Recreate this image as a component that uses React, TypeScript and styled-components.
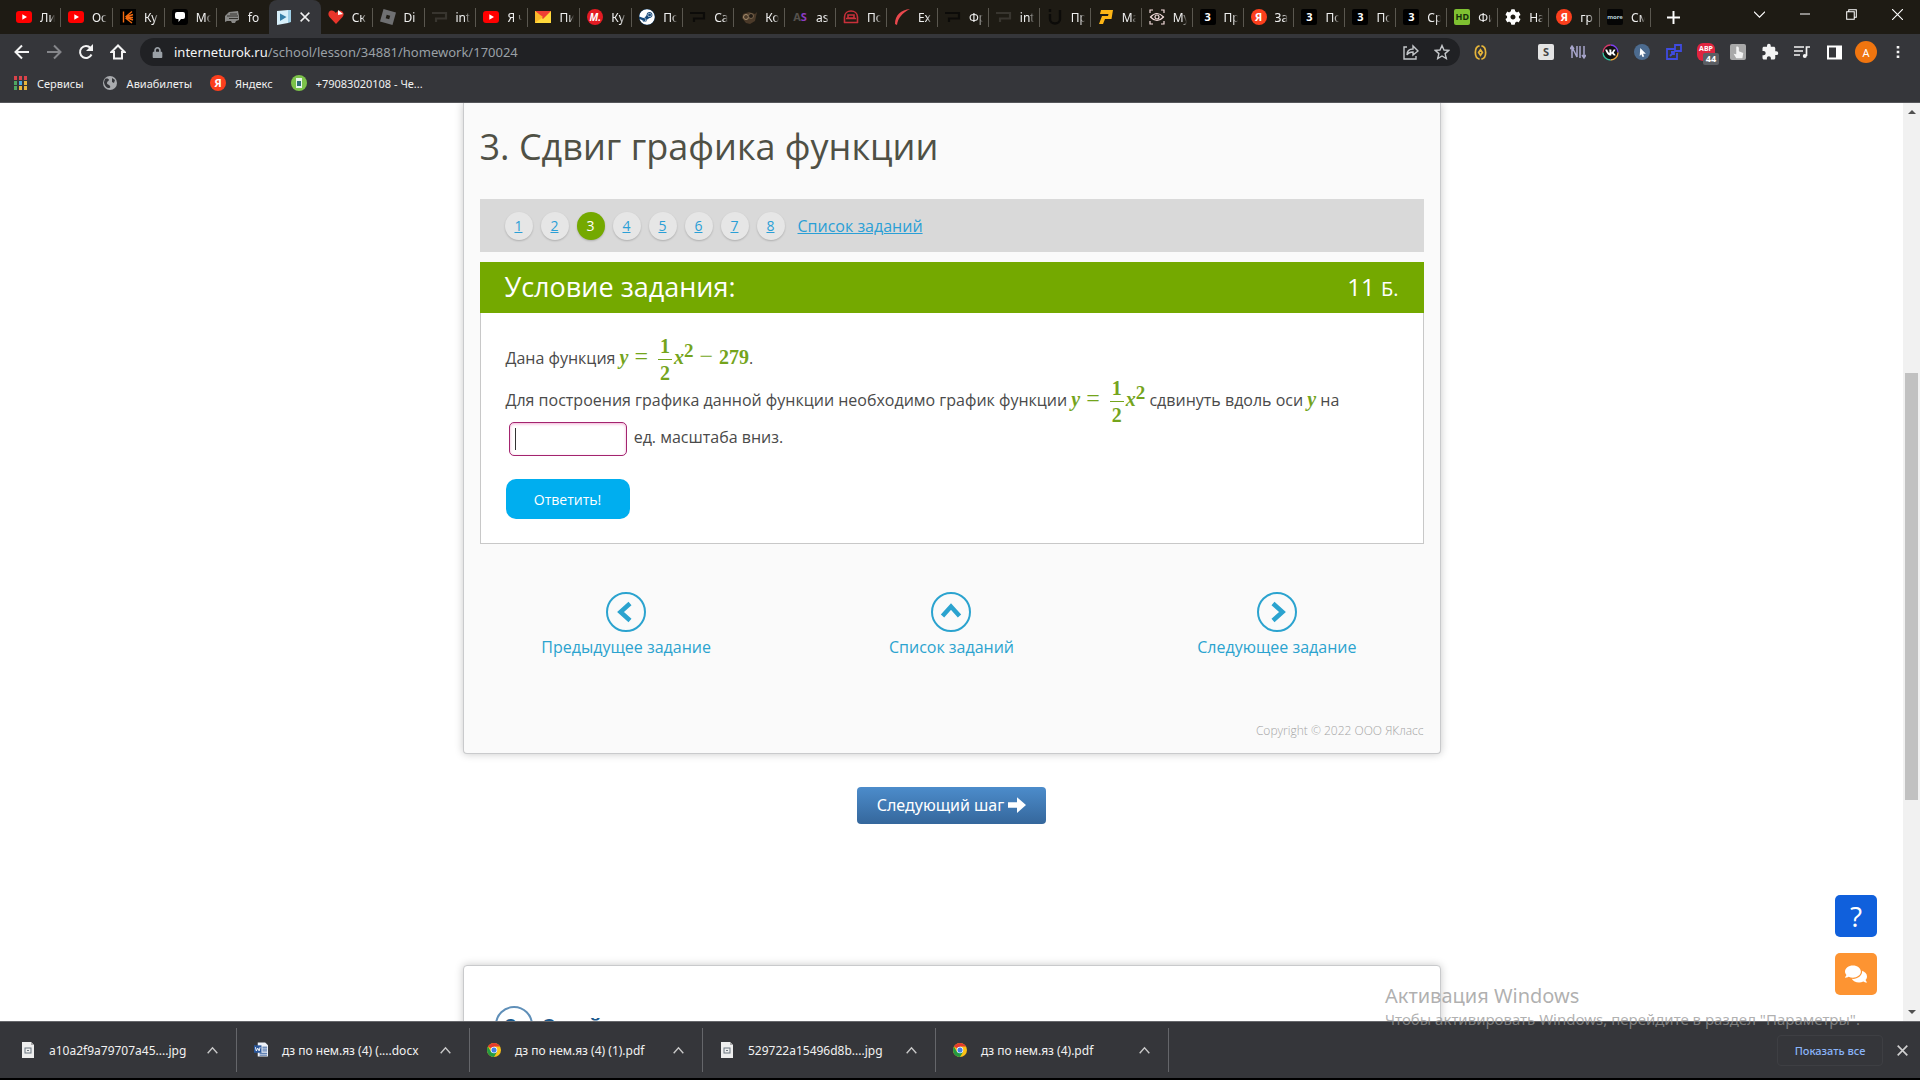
import React from "react";
import styled, { createGlobalStyle } from "styled-components";
import { FaSteam, FaCog, FaLock, FaVk, FaComments } from "react-icons/fa";
import { MdExtension } from "react-icons/md";

const ui = '"Noto Sans", "Open Sans", sans-serif';
const body = '"Open Sans", "Noto Sans", sans-serif';

const Global = createGlobalStyle`
  * { box-sizing: border-box; }
  body { margin: 0; background: #fff; font-family: ${body}; }
  button, input { font-family: inherit; margin: 0; }
  button { border: 0; padding: 0; background: none; color: inherit; cursor: pointer; }
  p, h1, h2 { margin: 0; font-weight: 400; }
  svg { display: block; flex: none; }
`;

const Screen = styled.div`
  height: 100vh;
  display: flex;
  flex-direction: column;
  overflow: hidden;
  position: relative;
`;

/* ---------- browser chrome ---------- */

const TabStrip = styled.div`
  height: 34px;
  flex: none;
  display: flex;
  background: #1e1b14;
  padding-left: 9px;
  font-family: ${ui};
`;
const Tabs = styled.div`
  flex: 1;
  min-width: 0;
  display: flex;
`;
const Tab = styled.button<{ $active?: boolean; $plain?: boolean }>`
  flex: 1 1 20px;
  min-width: 0;
  height: 34px;
  display: flex;
  align-items: center;
  gap: 8px;
  padding: 0 6px 0 7px;
  color: #f0f0f0;
  font-size: 12px;
  background: ${(p) =>
    p.$active ? "#35363a" : p.$plain ? "none" : "linear-gradient(#5a574f, #5a574f) no-repeat right 8px / 1px 19px"};
  border-radius: ${(p) => (p.$active ? "8px 8px 0 0" : "0")};
  &:nth-child(-n + 12) {
    flex-basis: 21px;
  }
`;
const TabTitle = styled.span`
  flex: 1;
  min-width: 0;
  overflow: hidden;
  white-space: nowrap;
  text-align: left;
  mask-image: linear-gradient(90deg, #000 65%, transparent);
`;
const WindowControls = styled.div`
  width: 269px;
  flex: none;
  display: flex;
  justify-content: flex-end;
  color: #fff;
`;
const NewTab = styled.button`
  width: 44px;
  height: 34px;
  display: grid;
  place-items: center;
  margin-right: auto;
`;
const WinButton = styled.button`
  width: 46px;
  height: 28px;
  display: grid;
  place-items: center;
`;
const Badge = styled.span<{ $bg: string; $fg: string; $round?: boolean; $size?: number }>`
  width: 16px;
  height: 16px;
  flex: none;
  display: grid;
  place-items: center;
  overflow: hidden;
  background: ${(p) => p.$bg};
  color: ${(p) => p.$fg};
  border-radius: ${(p) => (p.$round ? "50%" : "2px")};
  font-family: ${ui};
  font-size: ${(p) => p.$size ?? 11}px;
  font-weight: 700;
  line-height: 16px;
`;
const Muted = styled.span`
  color: #55514c;
`;
const Toolbar = styled.div`
  height: 36px;
  flex: none;
  display: flex;
  align-items: center;
  padding: 0 6px;
  background: #35363a;
  color: #f1f1f1;
  font-family: ${ui};
`;
const NavButton = styled.button<{ $dim?: boolean }>`
  width: 32px;
  height: 28px;
  display: grid;
  place-items: center;
  color: ${(p) => (p.$dim ? "#85868a" : "#f4f4f4")};
`;
const Omnibox = styled.div`
  flex: 1;
  height: 28px;
  display: flex;
  align-items: center;
  gap: 11px;
  margin: 0 4px 0 6px;
  padding: 0 8px 0 12px;
  border-radius: 14px;
  background: #202124;
  color: #9aa0a6;
  font-size: 13px;
`;
const Url = styled.span`
  flex: 1;
  white-space: nowrap;
  b { font-weight: 400; color: #f5f5f5; }
`;
const OmniIcon = styled.button`
  width: 20px;
  display: grid;
  place-items: center;
  color: #c4c7ca;
`;
const Extensions = styled.div`
  display: flex;
`;
const LoneExtension = styled(NavButton)`
  margin-right: 34px;
`;
const Avatar = styled.span`
  width: 22px;
  height: 22px;
  border-radius: 50%;
  background: #f0750f;
  color: #fff;
  font-size: 11px;
  display: grid;
  place-items: center;
`;
const BlockerIcon = styled.span`
  position: relative;
  width: 18px;
  height: 18px;
  padding-top: 2px;
  border-radius: 6px;
  background: #e0243f;
  color: #fff;
  font-size: 7px;
  line-height: 8px;
  font-weight: 700;
  text-align: center;
`;
const BlockerCount = styled.span`
  position: absolute;
  left: 6px;
  top: 10px;
  width: 16px;
  height: 12px;
  border-radius: 2px;
  background: #5b5e63;
  font-size: 9px;
  line-height: 12px;
  text-align: center;
`;
const Bookmarks = styled.nav`
  height: 33px;
  flex: none;
  display: flex;
  gap: 18px;
  padding: 4px 14px 10px;
  background: #35363a;
  border-bottom: 1px solid #55565a;
  font-family: ${ui};
`;
const Bookmark = styled.a`
  display: flex;
  align-items: center;
  gap: 9px;
  color: #f1f1f1;
  font-size: 11px;
  text-decoration: none;
  white-space: nowrap;
`;

/* ---------- page ---------- */

const Viewport = styled.div`
  flex: 1;
  min-height: 0;
  display: flex;
  overflow: hidden;
`;
const Page = styled.main`
  flex: 1;
  min-width: 0;
  display: flex;
  flex-direction: column;
  align-items: center;
  background: #fff;
`;
const Scrollbar = styled.div`
  width: 17px;
  flex: none;
  display: flex;
  flex-direction: column;
  align-items: center;
  padding: 5px 0;
  background: #f1f1f1;
  color: #505050;
`;
const Thumb = styled.div`
  width: 13px;
  flex: 0 0 47%;
  margin: 257px 0 auto;
  background: #c1c1c1;
`;
const Card = styled.section<{ $first?: boolean }>`
  width: 978px;
  max-width: 100%;
  flex: none;
  border: 1px solid #c9cacc;
  border-top-width: ${(p) => (p.$first ? 0 : 1)}px;
  border-radius: ${(p) => (p.$first ? "0 0 4px 4px" : "4px 4px 0 0")};
  background: ${(p) => (p.$first ? "#fafafa" : "#fff")};
  box-shadow: 0 0 8px rgba(0, 0, 0, 0.22);
`;
const Title = styled.h1`
  padding: 19px 16px 27px;
  font-size: 36px;
  line-height: 50px;
  color: #4f5045;
`;
const Steps = styled.nav`
  display: flex;
  align-items: center;
  gap: 8px;
  height: 53px;
  margin: 0 16px;
  padding: 0 25px;
  background: #d9d9d9;
`;
const Step = styled.a<{ $current?: boolean }>`
  width: 28px;
  height: 28px;
  border-radius: 50%;
  display: grid;
  place-items: center;
  font-size: 14px;
  background: ${(p) => (p.$current ? "#74a900" : "#e6e6e6")};
  color: ${(p) => (p.$current ? "#fff" : "#2a9fd6")};
  text-decoration: ${(p) => (p.$current ? "none" : "underline")};
  box-shadow: 0 1px 2px rgba(0, 0, 0, 0.2);
`;
const StepList = styled.a`
  margin-left: 5px;
  font-size: 16px;
  color: #2a9fd6;
`;
const Task = styled.article`
  margin: 10px 16px 0;
  border: 1px solid #c8c8c8;
  background: #fff;
`;
const TaskHead = styled.header`
  display: flex;
  align-items: center;
  justify-content: space-between;
  height: 51px;
  margin: -1px -1px 0;
  padding: 0 25px;
  background: #74a900;
  color: #fff;
`;
const TaskTitle = styled.h2`
  font-size: 27px;
  line-height: 34px;
  padding-bottom: 2px;
`;
const Points = styled.span`
  font-size: 24px;
  line-height: 34px;
  small { font-size: 20px; }
`;
const TaskBody = styled.form`
  padding: 26px 23px 24px 25px;
  font-size: 16px;
  line-height: 24px;
  color: #4a4a4a;
  p + p { margin-top: 1px; }
`;
const Formula = styled.span`
  white-space: nowrap;
  font-family: "Liberation Serif", serif;
  font-size: 20px;
  line-height: 20px;
  font-weight: 700;
  color: #74a41c;
`;
const Fraction = styled.span`
  display: inline-flex;
  flex-direction: column;
  vertical-align: middle;
  text-align: center;
  width: 14px;
  margin: 0 2px 0 4px;
  line-height: 14px;
`;
const Numerator = styled.span`
  padding-bottom: 6px;
  border-bottom: 1px solid #74a41c;
`;
const Denominator = styled.span`
  padding-top: 6px;
`;
const Power = styled.sup`
  font-size: 19px;
  line-height: 0;
  vertical-align: 7px;
`;
const Sign = styled.span`
  margin: 0 6px;
  font-size: 24px;
  line-height: 0;
  font-weight: 400;
`;
const Answer = styled.input`
  width: 118px;
  height: 34px;
  margin: 0 3px;
  padding: 0 6px;
  vertical-align: middle;
  border: 1px solid #a3246f;
  border-radius: 5px;
  outline: none;
  font-size: 16px;
  caret-color: transparent;
  background: linear-gradient(#333, #333) no-repeat 5px 5px / 1px 22px #fff;
  box-shadow: inset 0 1px 3px rgba(226, 60, 150, 0.4);
`;
const Submit = styled.button`
  display: block;
  width: 124px;
  height: 40px;
  margin-top: 23px;
  border-radius: 10px;
  background: #00aeef;
  color: #fff;
  font-size: 14px;
`;
const TaskNav = styled.nav`
  display: grid;
  grid-template-columns: repeat(3, 1fr);
  padding-top: 48px;
`;
const TaskLink = styled.a`
  display: flex;
  flex-direction: column;
  align-items: center;
  gap: 3px;
  font-size: 16px;
  line-height: 24px;
  color: #2ba3cf;
  text-decoration: none;
`;
const Copyright = styled.footer`
  padding: 61px 16px 11px;
  text-align: right;
  font-size: 12px;
  line-height: 22px;
  font-weight: 300;
  color: #a5a5a5;
`;
const NextStep = styled.button`
  flex: none;
  display: flex;
  align-items: center;
  gap: 4px;
  height: 37px;
  margin: 33px 0 141px;
  padding: 0 20px 2px;
  border-radius: 4px;
  background: linear-gradient(#4c8ccb, #35679c);
  color: #fff;
  font-family: ${ui};
  font-size: 16px;
`;
const AskHead = styled.div`
  display: flex;
  align-items: center;
  gap: 11px;
  height: 140px;
  padding: 40px 31px 62px;
  color: #1d5a8c;
  font-size: 18px;
  font-weight: 700;
`;
const AskNumber = styled.span`
  width: 38px;
  height: 38px;
  display: grid;
  place-items: center;
  border: 2px solid #5f8fb8;
  border-radius: 50%;
  font-size: 20px;
`;

/* ---------- overlays ---------- */

const Widgets = styled.div`
  position: absolute;
  right: 43px;
  bottom: 85px;
  display: flex;
  flex-direction: column;
  gap: 16px;
`;
const Widget = styled.button<{ $bg: string }>`
  width: 42px;
  height: 42px;
  display: grid;
  place-items: center;
  border-radius: 5px;
  background: ${(p) => p.$bg};
  color: #fff;
  font-size: 28px;
  line-height: 42px;
`;
const Watermark = styled.div`
  position: absolute;
  right: 75px;
  bottom: 51px;
  width: 460px;
  color: rgba(150, 150, 150, 0.75);
  font-family: ${ui};
  font-size: 15px;
  line-height: 20px;
  white-space: nowrap;
  pointer-events: none;
`;
const WatermarkTitle = styled.div`
  font-size: 20px;
  line-height: 26px;
`;

/* ---------- downloads ---------- */

const Downloads = styled.footer`
  height: 59px;
  flex: none;
  display: flex;
  align-items: center;
  padding: 0 8px 0 4px;
  background: #35363a;
  border-top: 1px solid #66676b;
  border-bottom: 2px solid #000;
  color: #f1f1f1;
  font-family: ${ui};
`;
const Download = styled.button`
  width: 233px;
  height: 44px;
  display: flex;
  align-items: center;
  gap: 14px;
  padding: 0 18px 0 17px;
  border-right: 1px solid #65666a;
  font-size: 12px;
  text-align: left;
  white-space: nowrap;
`;
const FileName = styled.span`
  flex: 1;
`;
const ShowAll = styled.button`
  width: 106px;
  height: 31px;
  margin-left: auto;
  border: 1px solid #3e3f43;
  border-radius: 4px;
  color: #8ab4f8;
  font-size: 11px;
  font-weight: 500;
`;
const CloseBar = styled.button`
  width: 20px;
  height: 30px;
  margin-left: 9px;
  display: grid;
  place-items: center;
`;

/* ---------- drawings ---------- */

type StrokeProps = { d: string; size?: number; w?: number; color?: string };
const Stroke = ({ d, size = 16, w = 2, color = "currentColor" }: StrokeProps) => (
  <svg width={size} height={size} viewBox="0 0 16 16" fill="none" stroke={color} strokeWidth={w}>
    <path d={d} />
  </svg>
);
const Fill = ({ d, color = "currentColor", size = 16, children }: { d: string; color?: string; size?: number; children?: React.ReactNode }) => (
  <svg width={size} height={size} viewBox="0 0 16 16">
    <path d={d} fill={color} />
    {children}
  </svg>
);
const YouTube = () => (
  <svg width="16" height="16" viewBox="0 0 16 16">
    <rect y="2" width="16" height="12" rx="3" fill="#f00" />
    <path d="M6.3 5.3 11 8l-4.7 2.7z" fill="#fff" />
  </svg>
);
const Pipe = ({ color = "#0c0b09" }: { color?: string }) => <Stroke d="M0 4H14V9.5H4V13" w={2.2} color={color} />;
const Three = () => <Badge $bg="#000" $fg="#fff">3</Badge>;
const Ya = () => <Badge $bg="#fc3f1d" $fg="#fff" $round>Я</Badge>;

const tabs: { icon: React.ReactNode; title: string }[] = [
  { icon: <YouTube />, title: "Ли" },
  { icon: <YouTube />, title: "Ос" },
  {
    icon: (
      <svg width="16" height="16" viewBox="0 0 16 16">
        <rect width="16" height="16" fill="#000" />
        <path d="M3.5 2.5v11M5.500 8 12 2.500M6 8l7-2.500M6 8.500h7M6 8.500l7 2.500M5.500 9l6.500 5" stroke="#f36a10" strokeWidth="1.400" />
      </svg>
    ),
    title: "Ку",
  },
  {
    icon: (
      <svg width="16" height="16" viewBox="0 0 16 16">
        <rect width="16" height="16" rx="3" fill="#000" />
        <path d="M3 5a2 2 0 0 1 2-2h6a2 2 0 0 1 2 2v3a2 2 0 0 1-2 2H9l-2.500 3V10H5a2 2 0 0 1-2-2z" fill="#fff" />
      </svg>
    ),
    title: "Мо",
  },
  { icon: <Fill color="#8a8a88" d="M1 7 5 3l9-1 1 5v4l-3 1-1 2H8l-1-2H3l-2 1z"><path d="M3 7h11M5 9.500h9M6 5h7" stroke="#33312c" /></Fill>, title: "fo" },
  {
    icon: (
      <svg width="16" height="16" viewBox="0 0 16 16">
        <path d="M1 2 12 1v13L1 16z" fill="#d8f0fb" />
        <path d="M12 1h3v12l-3 1z" fill="#9fcfe6" />
        <path d="M4 4.500 10.500 8 4 12z" fill="#357fa8" />
      </svg>
    ),
    title: "",
  },
  { icon: <Fill color="#e8352b" d="M8 15 1.500 8C-1 5 1 1 4 1.500 6 1.700 8 4 8 4s1.500-2.500 4-2.500C15 2 17 5 14.500 8z"><path d="M10 1v5l5-1z" fill="#fff" /></Fill>, title: "Ск" },
  { icon: <Fill color="#6f7072" d="M3.500 0 16 3.500 12.500 16 0 12.500z"><path d="m6.700 5.800 3.500 1-1 3.500-3.500-1z" fill="#1e1b14" /></Fill>, title: "Di" },
  { icon: <Pipe color="#38352f" />, title: "int" },
  { icon: <YouTube />, title: "Я ч" },
  {
    icon: (
      <svg width="16" height="16" viewBox="0 0 16 16">
        <path d="M0 2h16v12H0z" fill="#ffd93b" />
        <path d="M0 2h16L8 10z" fill="#ee4035" />
        <path d="M0 2v12l8-6z" fill="#fbb92a" />
      </svg>
    ),
    title: "Пи",
  },
  { icon: <Badge $bg="#e31b23" $fg="#fff" $round $size={10}><i>М.</i></Badge>, title: "Ку" },
  { icon: <Badge $bg="#174a7c" $fg="#fff" $round><FaSteam size={16} /></Badge>, title: "По" },
  { icon: <Pipe />, title: "Са" },
  { icon: <Fill color="#4b3a29" d="M2 5 8 3l6 2 2-2-2 9-5 3-4-1-4-5z"><circle cx="5" cy="8" r="2.500" fill="none" stroke="#a89070" /><circle cx="10" cy="7" r="2.500" fill="#211b14" stroke="#77644c" /></Fill>, title: "Ко" },
  { icon: <Badge $bg="transparent" $fg="#8e3bc4"><span><Muted>A</Muted>S</span></Badge>, title: "as" },
  { icon: <Stroke d="M1.500 14V8C1.500 0 14.500 0 14.500 8v6M1 13.500h14M5 9V6h6v3H5M3 9.500h10" w={1.6} color="#c9303a" />, title: "По" },
  { icon: <Fill color="#e9484d" d="M16 0C7 1 1 6 1 15l2 1C4 9 8 4 16 0z" />, title: "Ex" },
  { icon: <Pipe />, title: "Фр" },
  { icon: <Pipe color="#38352f" />, title: "int" },
  { icon: <Stroke d="M3 0v3M3 5v5c0 6 10 6 10 0V1" w={2.4} color="#0c0b09" />, title: "Пр" },
  { icon: <Fill color="#fdb515" d="M3 1h12l-1.500 9H7l-2 5H1l3-8h6l.5-2H2z" />, title: "Ма" },
  {
    icon: (
      <svg width="16" height="16" viewBox="0 0 16 16" fill="none" stroke="#f5dede" strokeWidth="1.200">
        <path d="M1 4V1h3M12 1h3v3M15 12v3h-3M4 15H1v-3M1.500 8Q8 1 14.500 8 8 15 1.500 8z" />
        <circle cx="8" cy="8" r="2" />
      </svg>
    ),
    title: "Му",
  },
  { icon: <Three />, title: "Пр" },
  { icon: <Ya />, title: "За" },
  { icon: <Three />, title: "По" },
  { icon: <Three />, title: "По" },
  { icon: <Three />, title: "Ср" },
  { icon: <Badge $bg="#7fc131" $fg="#16300a" $size={9}>HD</Badge>, title: "Фи" },
  { icon: <FaCog size={16} color="#fff" />, title: "На" },
  { icon: <Ya />, title: "гр" },
  { icon: <Badge $bg="#050505" $fg="#b8d0d8" $size={6}>more</Badge>, title: "См" },
];

const Globe = () => (
  <Fill color="#a9abae" d="M8 1a7 7 0 1 0 0 14A7 7 0 0 0 8 1z">
    <path d="M3 4c2-1 4 0 4 1s-2 1-2 3 2 1 3 3-1 2-2 2-4-3-4-6zM10 3l3 2-1 3-2-1z" fill="#35363a" />
  </Fill>
);
const Apps = () => (
  <svg width="14" height="16" viewBox="0 0 14 16">
    {["#d9434a", "#d9434a", "#d9434a", "#4fa862", "#49a7e0", "#e8b53c", "#4fa862", "#e8b53c", "#e8b53c"].map((c, i) => (
      <rect key={i} x={(i % 3) * 5} y={1 + Math.floor(i / 3) * 5} width="3" height="4" fill={c} />
    ))}
  </svg>
);
const Chrome = () => (
  <svg width="14" height="14" viewBox="0 0 16 16">
    <circle cx="8" cy="8" r="8" fill="#fbc116" />
    <path d="M8 8 1.100 4A8 8 0 0 1 14.900 4H8z" fill="#e33b2e" />
    <path d="M8 8 4.500 10 1.100 4A8 8 0 0 0 8 16l3.500-6z" fill="#249a41" />
    <circle cx="8" cy="8" r="3.700" fill="#fff" />
    <circle cx="8" cy="8" r="2.900" fill="#3f7ee8" />
  </svg>
);
const ImageFile = () => (
  <svg width="14" height="16" viewBox="0 0 14 16">
    <path d="M1 0h9l3 3v13H1z" fill="#eee" />
    <path d="M10 0v3h3" fill="#aaa" />
    <rect x="4" y="6" width="6" height="5" fill="none" stroke="#6b7680" />
    <rect x="6" y="8" width="2" height="1" fill="#6b7680" />
  </svg>
);
const WordFile = () => (
  <svg width="14" height="16" viewBox="0 0 15 16">
    <path d="M4 0h8l3 3v12H4z" fill="#eef2f8" />
    <path d="M9 5h5M9 7h5M9 9h5M6 11.500h8M6 13.500h8" stroke="#2b579a" />
    <path d="M0 3h8v8H0z" fill="#2b579a" />
    <path d="m1.500 5 1 4L4 6l1.500 3 1-4" fill="none" stroke="#fff" />
  </svg>
);
const RoundArrow = ({ d }: { d: string }) => (
  <svg width="40" height="40" viewBox="0 0 40 40" fill="none" stroke="#2ba3cf">
    <circle cx="20" cy="20" r="19" strokeWidth="2" />
    <path d={d} strokeWidth="4.500" />
  </svg>
);

const extensions: [string, React.ReactNode][] = [
  ["S", <Badge $bg="#e4e4e4" $fg="#444">S</Badge>],
  ["Эквалайзер", <Stroke d="M2 14V3l5 10V2M10 2v12M14 2v12M12 11l2 3 2-3M0 5l2-3 2 3" w={1.5} color="#a8a6cc" />],
  [
    "VK",
    <svg width="17" height="17" viewBox="0 0 17 17">
      <circle cx="8.500" cy="8.500" r="7.500" fill="#111" />
      <path d="M8.500 1a7.500 7.500 0 0 1 7.500 7.500" fill="none" stroke="#7b3ff0" strokeWidth="1.300" />
      <path d="M16 8.500A7.500 7.500 0 0 1 8.500 16" fill="none" stroke="#f0a63c" strokeWidth="1.300" />
      <path d="M8.500 16A7.500 7.500 0 0 1 1 8.500" fill="none" stroke="#33c4a0" strokeWidth="1.300" />
      <path d="M1 8.500A7.500 7.500 0 0 1 8.500 1" fill="none" stroke="#d63a6a" strokeWidth="1.300" />
      <FaVk x="3" y="3" size={11} color="#fff" />
    </svg>,
  ],
  ["Курсор", <Badge $bg="#4c6b8f" $fg="#fff" $round><Fill size={9} d="M4 0 14 10H9l2 5-3 1-2-5-3 3z" /></Badge>],
  ["Окна", <Stroke d="M9 5H1v10h10V9M9 1h6v6H9zM4 12l4-4M5 8h3v3" w={1.8} color="#3f4be0" />],
  ["Блокировщик", <BlockerIcon>ABP<BlockerCount>44</BlockerCount></BlockerIcon>],
  ["Касание", <Badge $bg="#a9a9a9" $fg="#f2f2f2"><Fill size={14} d="M6 2c2-1 3 0 3 2v3l5 2-1 6H6L3 10l3 .5z" /></Badge>],
  ["Расширения", <MdExtension size={18} />],
  [
    "Музыка",
    <svg width="16" height="16" viewBox="0 0 16 16" fill="none" stroke="currentColor" strokeWidth="1.700">
      <path d="M0 3h10M0 7h9M0 11h6M12.500 12V3H16" />
      <circle cx="10.800" cy="12" r="2" fill="currentColor" stroke="none" />
    </svg>,
  ],
  ["Боковая панель", <svg width="15" height="15" viewBox="0 0 15 15"><path d="M1 1.500h13v12H1z" fill="none" stroke="#fff" strokeWidth="2" /><path d="M9 1h5v13H9z" fill="#fff" /></svg>],
  ["Профиль", <Avatar>A</Avatar>],
  ["Меню", <Fill d="M6.700 2h2.600v2.600H6.700zM6.700 6.700h2.600v2.600H6.700zM6.700 11.400h2.600V14H6.700z" />],
];

const files: [React.ReactNode, string][] = [
  [<ImageFile />, "a10a2f9a79707a45....jpg"],
  [<WordFile />, "дз по нем.яз (4) (....docx"],
  [<Chrome />, "дз по нем.яз (4) (1).pdf"],
  [<ImageFile />, "529722a15496d8b....jpg"],
  [<Chrome />, "дз по нем.яз (4).pdf"],
];

const HalfXSquared = () => (
  <>
    <i>y</i><Sign>=</Sign>
    <Fraction>
      <Numerator>1</Numerator>
      <Denominator>2</Denominator>
    </Fraction>
    <i>x</i>
    <Power>2</Power>
  </>
);

export default function App() {
  return (
    <Screen>
      <Global />
      <TabStrip>
        <Tabs>
          {tabs.map((t, i) => (
            <Tab key={i} $active={i === 5} $plain={i === 4}>
              {t.icon}
              {i === 5 ? <Stroke size={10} w={2.4} d="M1 1l14 14M15 1 1 15" /> : <TabTitle>{t.title}</TabTitle>}
            </Tab>
          ))}
        </Tabs>
        <WindowControls>
          <NewTab aria-label="Новая вкладка"><Stroke size={13} w={2.4} d="M8 0v16M0 8h16" /></NewTab>
          <WinButton aria-label="Вкладки"><Stroke size={11} w={1.6} d="M0 4l8 8 8-8" /></WinButton>
          <WinButton aria-label="Свернуть"><Stroke size={10} w={1.6} d="M0 8h16" /></WinButton>
          <WinButton aria-label="Развернуть"><Stroke size={11} w={1.5} d="M1 4h11v11H1zM4 4V1h11v11h-3" /></WinButton>
          <WinButton aria-label="Закрыть"><Stroke size={11} w={1.6} d="M0 0l16 16M16 0 0 16" /></WinButton>
        </WindowControls>
      </TabStrip>
      <Toolbar>
        <NavButton aria-label="Назад"><Stroke d="M15 8H2M8 1.500 1.500 8 8 14.500" /></NavButton>
        <NavButton aria-label="Вперёд" $dim><Stroke d="M1 8h13M8 1.500 14.500 8 8 14.500" /></NavButton>
        <NavButton aria-label="Обновить">
          <svg width="16" height="16" viewBox="0 0 16 16"><path d="M13.500 10.500A6 6 0 1 1 12.500 4L14 5.500" fill="none" stroke="currentColor" strokeWidth="2" /><path d="M15 0v7H8z" fill="currentColor" /></svg>
        </NavButton>
        <NavButton aria-label="Домой"><Stroke d="M8 1.500 1.500 8H4v6.500h8V8h2.500z" /></NavButton>
        <Omnibox>
          <FaLock size={11} />
          <Url><b>interneturok.ru</b>/school/lesson/34881/homework/170024</Url>
          <OmniIcon aria-label="Поделиться"><Stroke w={1.4} d="M4 3H1v12h12v-3M4 11c0-4 2-6 6-6V2l5 5-5 4V8c-3 0-5 1-6 3z" /></OmniIcon>
          <OmniIcon aria-label="В закладки"><Stroke w={1.4} d="m8 1.500 2 4.500 4.800.4-3.700 3.200 1.200 4.900L8 12l-4.300 2.500 1.200-4.900L1.200 6.400 6 6z" /></OmniIcon>
        </Omnibox>
        <LoneExtension aria-label="Монета"><Stroke size={15} w={1.8} color="#e6b53a" d="M7 1C1 2 1 14 7 15M9 1c6 1 6 13 0 14M8 5 6 8l2 3 2-3z" /></LoneExtension>
        <Extensions>
          {extensions.map(([name, icon]) => (
            <NavButton key={name} aria-label={name}>{icon}</NavButton>
          ))}
        </Extensions>
      </Toolbar>
      <Bookmarks>
        <Bookmark href="#"><Apps />Сервисы</Bookmark>
        <Bookmark href="#"><Globe />Авиабилеты</Bookmark>
        <Bookmark href="#"><Ya />Яндекс</Bookmark>
        <Bookmark href="#">
          <Badge $bg="#7cc24a" $fg="#fff" $round><svg width="6" height="10"><rect width="6" height="10" fill="#e4f5ea" /><rect x="1" y="3" width="4" height="5" fill="#2d6d7a" /></svg></Badge>
          +79083020108 - Че...
        </Bookmark>
      </Bookmarks>
      <Viewport>
        <Page>
          <Card $first>
            <Title>3. Сдвиг графика функции</Title>
            <Steps>
              {[1, 2, 3, 4, 5, 6, 7, 8].map((n) => (
                <Step key={n} href="#" $current={n === 3}>{n}</Step>
              ))}
              <StepList href="#">Список заданий</StepList>
            </Steps>
            <Task>
              <TaskHead>
                <TaskTitle>Условие задания:</TaskTitle>
                <Points>11 <small>Б.</small></Points>
              </TaskHead>
              <TaskBody onSubmit={(e) => e.preventDefault()}>
                <p>
                  Дана функция{" "}
                  <Formula><HalfXSquared /><Sign>−</Sign>279</Formula>.
                </p>
                <p>
                  Для построения графика данной функции необходимо график функции{" "}
                  <Formula><HalfXSquared /></Formula> сдвинуть вдоль оси <Formula><i>y</i></Formula> на{" "}
                  <Answer aria-label="Ответ" type="text" /> ед. масштаба вниз.
                </p>
                <Submit type="submit">Ответить!</Submit>
              </TaskBody>
            </Task>
            <TaskNav>
              <TaskLink href="#"><RoundArrow d="M24 11.500 14.500 20 24 28.500" />Предыдущее задание</TaskLink>
              <TaskLink href="#"><RoundArrow d="M11.500 24 20 14.500 28.500 24" />Список заданий</TaskLink>
              <TaskLink href="#"><RoundArrow d="M16 11.500 25.500 20 16 28.500" />Следующее задание</TaskLink>
            </TaskNav>
            <Copyright>Copyright © 2022 ООО ЯКласс</Copyright>
          </Card>
          <NextStep>
            Следующий шаг
            <Fill size={18} d="M0 5.500h8V1l8 7-8 7v-4.500H0z" />
          </NextStep>
          <Card>
            <AskHead><AskNumber>2.</AskNumber>Задай</AskHead>
          </Card>
        </Page>
        <Scrollbar>
          <Fill size={8} d="M0 12 8 4l8 8z" />
          <Thumb />
          <Fill size={8} d="M0 4l8 8 8-8z" />
        </Scrollbar>
      </Viewport>
      <Downloads>
        {files.map(([icon, name]) => (
          <Download key={name}>
            {icon}
            <FileName>{name}</FileName>
            <Stroke size={11} w={2} color="#c8c8c8" d="M1 12l7-8 7 8" />
          </Download>
        ))}
        <ShowAll>Показать все</ShowAll>
        <CloseBar aria-label="Закрыть панель"><Stroke size={11} w={2.4} color="#d0d0d0" d="M1 1l14 14M15 1 1 15" /></CloseBar>
      </Downloads>
      <Widgets>
        <Widget $bg="#1060dc">?</Widget>
        <Widget $bg="#fd9432" aria-label="Чат"><FaComments size={22} /></Widget>
      </Widgets>
      <Watermark>
        <WatermarkTitle>Активация Windows</WatermarkTitle>
        Чтобы активировать Windows, перейдите в раздел "Параметры".
      </Watermark>
    </Screen>
  );
}
